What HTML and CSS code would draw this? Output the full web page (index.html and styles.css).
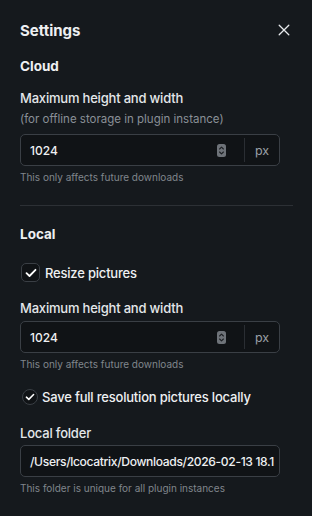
FILE: index.html
```html
<!DOCTYPE html>
<html>
<head>
<meta charset="utf-8">
<link rel="stylesheet" href="styles.css">
</head>
<body>
<div class="panel">
  <header class="head">
    <h1 class="title">Settings</h1>
    <svg class="close" width="12" height="12" viewBox="0 0 12 12"><path d="M1.2 1.2L10.8 10.8M10.8 1.2L1.2 10.8" stroke="#e6e9ec" stroke-width="1.3" stroke-linecap="round"/></svg>
  </header>

  <section class="section">
    <h2 class="sec-title">Cloud</h2>
    <div class="field">
      <label class="label">Maximum height and width</label>
      <div class="sub">(for offline storage in plugin instance)</div>
      <div class="input-group">
        <span class="num">1024</span>
        <span class="spin"><svg width="9" height="13" viewBox="0 0 9 13"><rect width="9" height="13" rx="2.5" fill="#6e7379"/><path d="M2.6 5L4.5 3.2L6.4 5M2.6 8L4.5 9.8L6.4 8" stroke="#1b1e22" stroke-width="1.1" fill="none" stroke-linecap="round" stroke-linejoin="round"/></svg></span>
        <span class="unit">px</span>
      </div>
      <div class="help">This only affects future downloads</div>
    </div>
  </section>

  <hr class="divider">

  <section class="section section-local">
    <h2 class="sec-title">Local</h2>
    <div class="check">
      <span class="box"><svg width="12" height="10" viewBox="0 0 12 10"><path d="M1.5 5.2L4.5 8L10.5 1.8" stroke="#fff" stroke-width="1.8" fill="none" stroke-linecap="round" stroke-linejoin="round"/></svg></span>
      <span class="check-label">Resize pictures</span>
    </div>
    <div class="field field-after-check">
      <label class="label">Maximum height and width</label>
      <div class="input-group">
        <span class="num">1024</span>
        <span class="spin"><svg width="9" height="13" viewBox="0 0 9 13"><rect width="9" height="13" rx="2.5" fill="#6e7379"/><path d="M2.6 5L4.5 3.2L6.4 5M2.6 8L4.5 9.8L6.4 8" stroke="#1b1e22" stroke-width="1.1" fill="none" stroke-linecap="round" stroke-linejoin="round"/></svg></span>
        <span class="unit">px</span>
      </div>
      <div class="help">This only affects future downloads</div>
    </div>
    <div class="check check-sm">
      <span class="box"><svg width="10" height="8" viewBox="0 0 12 10"><path d="M1.5 5.2L4.5 8L10.5 1.8" stroke="#fff" stroke-width="1.9" fill="none" stroke-linecap="round" stroke-linejoin="round"/></svg></span>
      <span class="check-label">Save full resolution pictures locally</span>
    </div>
    <div class="field field-folder">
      <label class="label">Local folder</label>
      <div class="text-input"><span class="path">/Users/lcocatrix/Downloads/2026-02-13 18.1</span></div>
      <div class="help">This folder is unique for all plugin instances</div>
    </div>
  </section>
</div>
</body>
</html>
```
FILE: styles.css
```css
* { box-sizing: border-box; }
html, body { margin: 0; padding: 0; }
body {
  background: #15191d;
  color: #e8ebee;
  font-family: Inter, "Noto Sans", sans-serif;
  width: 312px;
  height: 516px;
  overflow: hidden;
}
.panel {
  padding: 20px 20px 0 20px;
}
.head {
  display: flex;
  align-items: center;
  justify-content: space-between;
  height: 20px;
  padding-right: 2px;
}
.title {
  margin: 0;
  font-size: 15px;
  font-weight: 700;
  color: #eef0f2;
}
.close { display: block; }
.section { display: flex; flex-direction: column; }
.sec-title {
  margin: 17px 0 0 0;
  font-size: 13.5px;
  font-weight: 700;
  line-height: 18px;
  color: #eef0f2;
}
.section-local .sec-title { margin-top: 19px; }
.field { display: flex; flex-direction: column; }
.label {
  margin-top: 14px;
  font-size: 13px;
  letter-spacing: -0.2px;
  font-weight: 500;
  line-height: 18px;
  color: #e4e7ea;
}
.field-after-check .label { margin-top: 17px; }
.field-folder .label { margin-top: 19px; }
.sub {
  margin-top: 4px;
  margin-bottom: 3px;
  font-size: 11.5px;
  line-height: 16px;
  color: #8a9097;
}
.input-group {
  margin-top: 4px;
  width: 260px;
  height: 32px;
  border: 1px solid #3a3f45;
  border-radius: 5px;
  background: #101316;
  display: flex;
  align-items: center;
}
.num {
  flex: 1;
  padding-left: 9px;
  font-size: 12px;
  font-weight: 500;
  color: #eef0f2;
}
.spin {
  display: flex;
  align-items: center;
  height: 24px;
  border-right: 1px solid #2a2e33;
}
.spin svg { display: block; margin-right: 18px; }
.unit {
  width: 34px;
  text-align: center;
  font-size: 12.5px;
  color: #9aa0a6;
}
.help {
  margin-top: 4px;
  font-size: 10px;
  line-height: 14px;
  color: #80868c;
}
.divider {
  margin: 21px 0 0 0;
  border: 0;
  border-top: 1px solid #2c3035;
  width: 273px;
}
.check {
  display: flex;
  align-items: center;
  margin-top: 20px;
}
.box {
  width: 19px;
  height: 19px;
  border: 1px solid #3a3f45;
  border-radius: 5px;
  background: #101316;
  display: flex;
  align-items: center;
  justify-content: center;
  margin-left: 1px;
}
.check-label {
  margin-left: 5px;
  font-size: 13px;
  letter-spacing: -0.2px;
  font-weight: 500;
  color: #eef0f2;
}
.check-sm { margin-top: 18px; }
.check-sm .box {
  width: 16px;
  height: 16px;
  border-radius: 8px;
  margin-left: 2px;
}
.check-sm .check-label { margin-left: 4px; }
.text-input {
  margin-top: 3px;
  width: 260px;
  height: 32px;
  border: 1px solid #3a3f45;
  border-radius: 5px;
  background: #101316;
  padding: 0 6px 0 9px;
  display: flex;
  align-items: center;
  overflow: hidden;
}
.path {
  white-space: nowrap;
  font-size: 12.1px;
  letter-spacing: -0.35px;
  font-weight: 500;
  color: #eef0f2;
}
```
